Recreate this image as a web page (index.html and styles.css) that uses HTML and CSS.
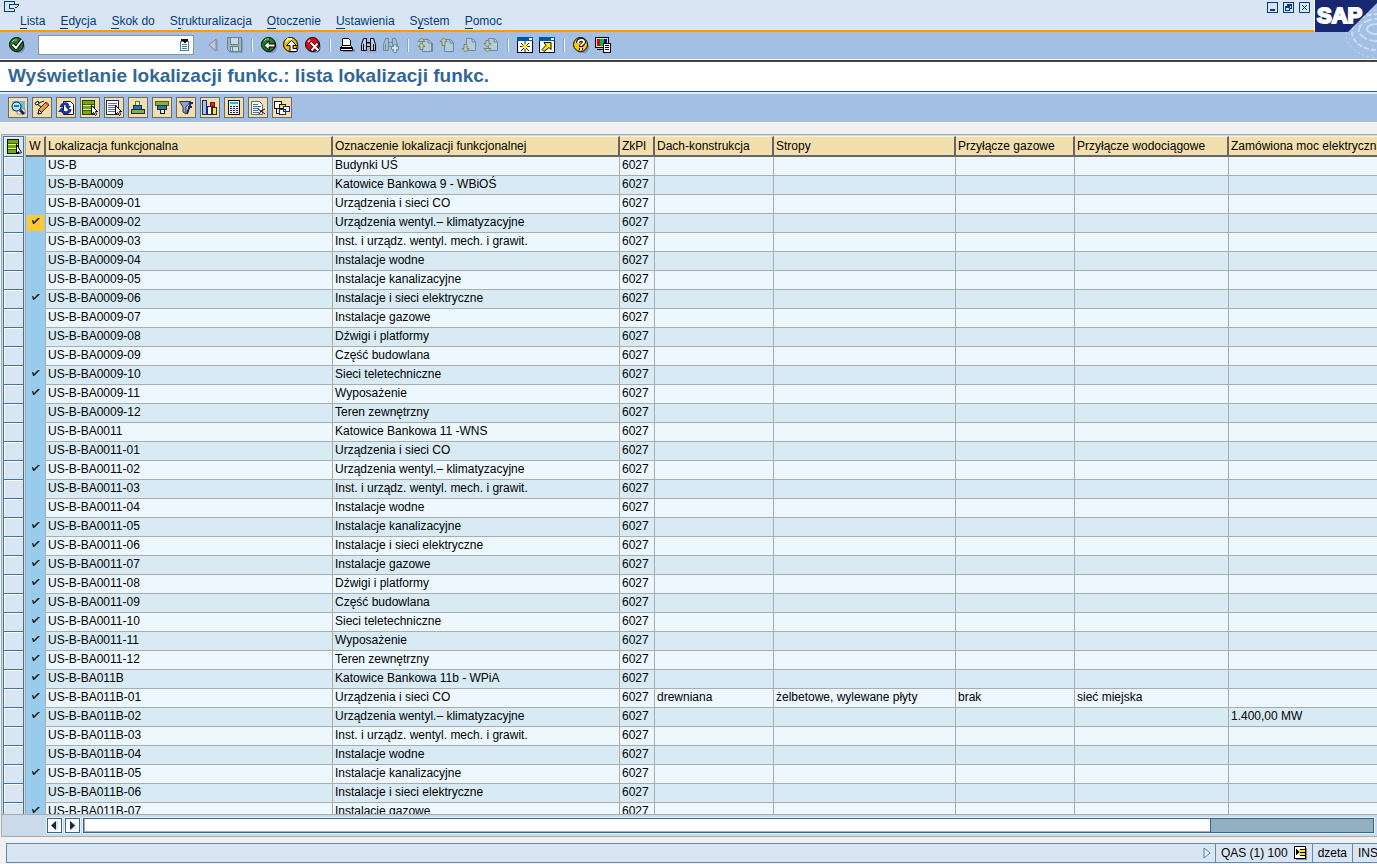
FILE: index.html
```html
<!DOCTYPE html>
<html lang="pl">
<head>
    <meta charset="UTF-8">
    <meta name="viewport" content="width=device-width, initial-scale=1.0">
    <title>Wyświetlanie lokalizacji funkc.: lista lokalizacji funkc.</title>
    <link rel="stylesheet" href="styles.css">
</head>
<body>
    <header class="header">
        <div class="header-main">
            <div class="menubar">
                <div class="window-row">
                    <button class="system-menu" aria-label="Menu">
                        <svg width="15" height="11" viewBox="0 0 15 11" fill="none" stroke="#003c7d" shape-rendering="crispEdges"><path d="M10.5 3V.5H.5v10h10V8M5.500 3.500h9M5.500 3v5M5 7.500h5M14 4v1M13 5v1M12 6v1M11 6v1" /></svg>
                    </button>
                    <div class="window-buttons">
                        <button aria-label="Minimalizuj"><svg width="11" height="11" shape-rendering="crispEdges"><path fill="none" stroke="#003c7d" d="M.5.5h10v10H.5z"/><path fill="#003c7d" d="M3 7h5v2H3z"/></svg></button>
                        <button aria-label="Przywróć"><svg width="11" height="11" shape-rendering="crispEdges"><path fill="none" stroke="#003c7d" d="M.5.5h10v10H.5zM4.500 5V2.500h4v4H7M2.500 4.500h4v4h-4z"/><path fill="#003c7d" d="M4 2h5v2H4zM2 4h5v2H2z"/></svg></button>
                        <button aria-label="Zamknij"><svg width="11" height="11"><path fill="none" stroke="#003c7d" d="M.5.5h10v10H.5zM3 3l5 5M8 3L3 8"/></svg></button>
                    </div>
                </div>
                <nav class="menu">
                    <a href="#"><u>L</u>ista</a>
                    <a href="#"><u>E</u>dycja</a>
                    <a href="#"><u>S</u>kok do</a>
                    <a href="#">S<u>t</u>rukturalizacja</a>
                    <a href="#"><u>O</u>toczenie</a>
                    <a href="#"><u>U</u>stawienia</a>
                    <a href="#">S<u>y</u>stem</a>
                    <a href="#"><u>P</u>omoc</a>
                </nav>
            </div>
            <div class="toolbar">
                <button aria-label="Enter"><svg class="icon" viewBox="0 0 16 16"><circle cx="9.500" cy="10" r="6.500" fill="#8585bf"/><circle cx="7.500" cy="7.500" r="7" fill="#207d22" stroke="#000"/><path d="M3 5l2-2h3" stroke="#8ee07c" fill="none"/><path d="M3.500 7.500l3.500 3.500 6-8" fill="none" stroke="#000" stroke-width="4"/><path d="M3.500 7.500l3.500 3.500 6-8" fill="none" stroke="#fff" stroke-width="2"/></svg></button>
                <div class="command">
                    <input type="text" aria-label="Pole komend">
                    <button aria-label="Historia"><svg width="9" height="12" shape-rendering="crispEdges"><path d="M.5 2.500h8v9h-8z" fill="#fff" stroke="#4c7da8"/><path d="M2 5.500h5M2 7.500h5M2 9.500h5" stroke="#4c7da8"/><path d="M1 0h7v2H7v1H6v1H4V3H3V2H1z" fill="#111"/></svg></button>
                </div>
                <button aria-label="Poprzednia"><svg class="icon" viewBox="0 0 16 16"><path d="M11 2v12l-7-6z" fill="#c7cbd1" stroke="#7b8796"/><path d="M12 3v11" stroke="#8189bd"/></svg></button>
                <button aria-label="Zapisz" disabled><svg class="icon" viewBox="0 0 16 16" shape-rendering="crispEdges"><path d="M3 2h13v14H3z" fill="#8e9bc8"/><path d="M.5.5h14v14h-12l-2-2z" fill="#9eb6bd" stroke="#69828f"/><path d="M4 1h7v6H4zM4 10h8v4H4z" fill="#c8d8df"/><path d="M3.500 1v6.500h8V1M3.500 14V9.500h8V14M5.500 10v4" fill="none" stroke="#69828f"/></svg></button>
                <span class="separator"></span>
                <button aria-label="Wstecz"><svg class="icon" viewBox="0 0 16 16"><circle cx="9.500" cy="10" r="6.500" fill="#8585bf"/><circle cx="7.500" cy="7.500" r="7" fill="#207d22" stroke="#000"/><path d="M3 4l2-2h3" stroke="#8ee07c" fill="none"/><path d="M3 8.500L8 4v3h6v3H8v3z" fill="#fff" stroke="#000"/></svg></button>
                <button aria-label="Zakończ"><svg class="icon" viewBox="0 0 16 16"><circle cx="9.500" cy="10" r="6.500" fill="#8585bf"/><circle cx="7.500" cy="7.500" r="7" fill="#f2b900" stroke="#000"/><path d="M3 5l2-3h4" stroke="#fff78c" stroke-width="2" fill="none"/><path d="M8.500 3.500l5 5H10v3h4v3H7v-6H3.500z" fill="#fff" stroke="#000"/></svg></button>
                <button aria-label="Anuluj"><svg class="icon" viewBox="0 0 16 16"><circle cx="9.500" cy="10" r="6.500" fill="#8585bf"/><circle cx="7.500" cy="7.500" r="7" fill="#df0613" stroke="#000"/><path d="M3 5l2-2" stroke="#ffb0b0" stroke-width="2"/><path d="M5 5l9 9M13 6l-7 8" stroke="#000" stroke-width="3"/><path d="M5.500 5.500l8 8M12.500 6.500l-6 7" stroke="#fff" stroke-width="2"/></svg></button>
                <span class="separator"></span>
                <button aria-label="Drukuj"><svg class="icon" viewBox="0 0 16 16"><path d="M3 12h13v3H4z" fill="#8585bf"/><path d="M3.500 1.500h6l2 2v6h-8z" fill="#fff" stroke="#000"/><path d="M3.500 8.500l-2 2v3h12v-3l-2-2z" fill="#fff" stroke="#000"/><path d="M1 11h12" stroke="#000" stroke-width="2"/></svg></button>
                <button aria-label="Szukaj"><svg class="icon" viewBox="0 0 16 16"><path d="M4 7h12v9H4z" fill="#a8a7cf"/><path d="M2.500 1.500h3v4h4v-4h3l2 6v6h-5v-4h-4v4h-5v-6z" fill="#bfc8e8" stroke="#000"/><path d="M5.500 5v5M9.500 5v5M2.500 7v6M12.500 7v6M6 6h4" stroke="#000"/></svg></button>
                <button aria-label="Szukaj dalej" disabled><svg class="icon" viewBox="0 0 16 16"><path d="M2.500 1.500h3v4h4v-4h3l2 6v6h-5v-4h-4v4h-5v-6z" fill="#a6bfd4" stroke="#698c9d"/><path d="M5.500 5v5M9.500 5v5M2.500 7v6" stroke="#698c9d"/><path d="M10.500 7.500h3v2h2v3h-2v3h-3v-3h-2v-3h2z" fill="#d4e1ec" stroke="#698c9d"/></svg></button>
                <span class="separator"></span>
                <button aria-label="Pierwsza strona" disabled><svg class="icon" viewBox="0 0 16 16"><path d="M5.500 2.500h6l3 3v9h-9z" fill="#b5ccda" stroke="#698c9d"/><path d="M11 3v3h3M6 14.500h9.500V6" fill="none" stroke="#7381ad"/><path d="M4.500 1l3.500 3.500H1zM4.500 6L8 9.500H6v3H3v-3H1z" fill="#c9cba4" stroke="#738475"/></svg></button>
                <button aria-label="Poprzednia strona" disabled><svg class="icon" viewBox="0 0 16 16"><path d="M5.500 2.500h6l3 3v9h-9z" fill="#b5ccda" stroke="#698c9d"/><path d="M11 3v3h3" fill="none" stroke="#7381ad"/><path d="M4.500 1L8 4.500H6v4H3v-4H1z" fill="#c9cba4" stroke="#738475"/></svg></button>
                <button aria-label="Następna strona" disabled><svg class="icon" viewBox="0 0 16 16"><path d="M5.500 1.500h6l3 3v9h-9z" fill="#b5ccda" stroke="#698c9d"/><path d="M11 2v3h3" fill="none" stroke="#7381ad"/><path d="M3 7.500h3v4h2L4.500 15 1 11.500h2z" fill="#c9cba4" stroke="#738475"/></svg></button>
                <button aria-label="Ostatnia strona" disabled><svg class="icon" viewBox="0 0 16 16"><path d="M5.500 1.500h6l3 3v9h-9z" fill="#b5ccda" stroke="#698c9d"/><path d="M11 2v3h3" fill="none" stroke="#7381ad"/><path d="M3 3.500h3v3h2L4.500 10 1 6.500h2zM1 11.500h7L4.500 15z" fill="#c9cba4" stroke="#738475"/></svg></button>
                <span class="separator"></span>
                <button aria-label="Nowy tryb"><svg class="icon" viewBox="0 0 16 16" shape-rendering="crispEdges"><path d="M.5.5h15v15H.5z" fill="#fff" stroke="#000"/><path d="M0 0h16v4H0z" fill="#0057a4"/><path d="M12 1h3v2h-3z" fill="#fff"/><g shape-rendering="auto"><path d="M8 4v11M3 9.500h10M4 6l8 8M12 6l-8 8" stroke="#222"/><path d="M8 7v5M5.500 9.500h5" stroke="#ffe900" stroke-width="2"/></g></svg></button>
                <button aria-label="Generuj skrót"><svg class="icon" viewBox="0 0 16 16"><path d="M.5.5h15v15H.5z" fill="#fff" stroke="#000"/><path d="M0 0h16v4H0z" fill="#0057a4"/><path d="M12 1h3v2h-3z" fill="#fff"/><path d="M5 5.500h7v7l-2-2-5 4-2-2 4-4z" fill="#ffe900" stroke="#000"/></svg></button>
                <span class="separator"></span>
                <button aria-label="Pomoc"><svg class="icon" viewBox="0 0 16 16"><circle cx="9.500" cy="10" r="6.500" fill="#8585bf"/><circle cx="7.500" cy="7.500" r="7" fill="#ffca00" stroke="#000"/><path d="M5 6c0-4 6-4 6-1 0 2-3 2-3 5M8 11v2" fill="none" stroke="#000" stroke-width="4"/><path d="M5 6c0-4 6-4 6-1 0 2-3 2-3 4M8 11v2" fill="none" stroke="#fff" stroke-width="2"/></svg></button>
                <button aria-label="Układ lokalny"><svg class="icon" viewBox="0 0 16 16" shape-rendering="crispEdges"><path d="M.5.5h13v10H.5zM2 12.500h9" fill="#ddd" stroke="#000"/><path d="M2 2h3v7H2z" fill="#d00"/><path d="M5 2h4v7H5z" fill="#0b2"/><path d="M9 2h3v7H9z" fill="#00c"/><path d="M8.500 6.500h7v9h-7z" fill="#fff" stroke="#000"/><path d="M10 8.500h4M10 10.500h4M10 12.500h4" stroke="#000"/></svg></button>
            </div>
        </div>
        <svg class="logo" viewBox="0 0 62 59" role="img" aria-label="SAP">
            <path d="M0 0h62v59H0z" fill="#a3c0e4"/>
            <g fill="none" stroke="#c9dcf3" stroke-width="2">
                <ellipse cx="62" cy="29" rx="10" ry="5"/>
                <ellipse cx="62" cy="30" rx="18" ry="11" stroke-dasharray="9 2"/>
                <ellipse cx="62" cy="32" rx="25" ry="18" stroke-dasharray="5 2"/>
                <ellipse cx="64" cy="34" rx="33" ry="24" stroke-dasharray="2 3" stroke-width="1"/>
            </g>
            <path d="M0 0h62v3L33 32H0z" fill="#16286f"/>
            <text class="logo-text" x="2" y="23">SAP</text>
        </svg>
    </header>

    <h1 class="title">Wyświetlanie lokalizacji funkc.: lista lokalizacji funkc.</h1>

    <div class="app-toolbar">
        <button aria-label="Szczegóły"><svg class="icon" viewBox="0 0 16 16"><path d="M2 1h13v10H2z" fill="#6eb9e8"/><path d="M7 9h8v5H7z" fill="#f7f7ef" stroke="#8a94a0"/><circle cx="6.500" cy="6.500" r="4.500" fill="#b9e5f5" stroke="#111"/><path d="M4 5h5v2H4z" fill="#0083cf"/><path d="M10 10l4 4" stroke="#16286f" stroke-width="3"/></svg></button>
        <button aria-label="Wyświetl/Zmień"><svg class="icon" viewBox="0 0 16 16"><path d="M1 3l3-2 1 3-3 1zM5 3l5-2M4 5l4 2" fill="#fff" stroke="#111"/><path d="M4 14l1-5 7-7 3 3-7 7z" fill="#f1a026" stroke="#16286f"/><path d="M11 3l3 3 1-2-2-2z" fill="#d24230"/><path d="M4 14l1-4 3 3z" fill="#fff" stroke="#111"/></svg></button>
        <button aria-label="Odśwież"><svg class="icon" viewBox="0 0 16 16"><path d="M5.500 1.500h7l3 3v10h-10z" fill="#fff" stroke="#111"/><path d="M3.500 7C4 3 9 3 10 6M12 9c0 4-6 5-8 2" fill="none" stroke="#1c30a5" stroke-width="3"/><path d="M7 6h6l-3 4zM0 12l4-5 3 5zM1 7h4V4z" fill="#1c30a5"/></svg></button>
        <button aria-label="Zaznacz wszystko"><svg class="icon" viewBox="0 0 16 16" shape-rendering="crispEdges"><path d="M.5.500h12v14H.500z" fill="#78a900" stroke="#263c12"/><path d="M1 5.500h11M1 9.500h11" stroke="#e7efb7"/><path d="M1 4.500h11M1 10.500h11" stroke="#38650c"/><path d="M9.500 5.500v9l2-2 2 3 1-1-1-3h2z" fill="#fff" stroke="#000" shape-rendering="auto"/></svg></button>
        <button aria-label="Usuń zaznaczenie"><svg class="icon" viewBox="0 0 16 16" shape-rendering="crispEdges"><path d="M.5.500h12v14H.500z" fill="#fff" stroke="#16286f"/><path d="M2 3.500h9M2 5.500h9M2 7.500h7M2 9.500h7M2 11.500h7" stroke="#646caf"/><path d="M9.500 5.500v9l2-2 2 3 1-1-1-3h2z" fill="#fff" stroke="#000" shape-rendering="auto"/></svg></button>
        <button aria-label="Sortuj rosnąco"><svg class="icon" viewBox="0 0 16 16" shape-rendering="crispEdges"><path d="M5.500 1.500h4v4h-4z" fill="#eff0b0" stroke="#5c7730"/><path d="M3.500 5.500h8v4h-8z" fill="#257c9d" stroke="#16286f"/><path d="M1.500 9.500h13v4h-13z" fill="#8ab02e" stroke="#16286f"/></svg></button>
        <button aria-label="Sortuj malejąco"><svg class="icon" viewBox="0 0 16 16" shape-rendering="crispEdges"><path d="M1.500 1.500h13v4h-13z" fill="#8ab02e" stroke="#476126"/><path d="M3.500 5.500h9v4h-9z" fill="#257c9d" stroke="#16286f"/><path d="M6.500 9.500h4v4h-4z" fill="#eff0b0" stroke="#111"/></svg></button>
        <button aria-label="Filtr"><svg class="icon" viewBox="0 0 16 16"><path d="M1.500 1.500h11L8 7v7l-3-2V7z" fill="#8ea4c8" stroke="#263250"/><path d="M9 14l4-12M11 3h4M10 7h4" fill="none" stroke="#16286f" stroke-width="2"/></svg></button>
        <button aria-label="Układ"><svg class="icon" viewBox="0 0 16 16" shape-rendering="crispEdges"><path d="M.5.500h4v14h-4z" fill="#a4c4e5" stroke="#16286f"/><path d="M5.500 6.500h4v8h-4z" fill="#fff" stroke="#16286f"/><path d="M8.500 2.500h4v4h-4z" fill="#e02020" stroke="#731616"/><path d="M10.500 7.500h4v7h-4z" fill="#ffe800" stroke="#16286f"/></svg></button>
        <button aria-label="Kalkulator"><svg class="icon" viewBox="0 0 16 16" shape-rendering="crispEdges"><path d="M2.500.500h11v14h-11z" fill="#eee" stroke="#111"/><path d="M4 2h8v2H4z" fill="#28bfc1"/><path d="M4 6.500h8M4 8.500h8M4 10.500h8M4 12.500h8" stroke="#16286f" stroke-dasharray="2 1"/></svg></button>
        <button aria-label="Klasyfikacja"><svg class="icon" viewBox="0 0 16 16"><path d="M1.500 1.500h8l3 3v10h-11z" fill="#f5faff" stroke="#536d94"/><path d="M3 4.500h5M3 6.500h8M3 8.500h6M3 10.500h5M3 12.500h6" stroke="#48709c"/><path d="M8 9l3 2 4-2M11 11l-2 3M11 11l4 3" fill="none" stroke="#111"/></svg></button>
        <button aria-label="Hierarchia"><svg class="icon" viewBox="0 0 16 16" shape-rendering="crispEdges"><path d="M.5 1.500h7v7h-7zM2.500 9v4h3" fill="#fff" stroke="#111"/><path d="M5.500 4.500h6v4h-6z" fill="#ffe800" stroke="#111"/><path d="M9.500 6.500h6v5h-6zM5.500 9.500h6v5h-6z" fill="#fff" stroke="#16286f"/></svg></button>
    </div>

    <main class="grid">
        <div class="grid-view">
            <table>
                <colgroup>
                    <col class="col-select"><col class="col-mark"><col class="col-location"><col class="col-name"><col class="col-plant"><col class="col-roof"><col class="col-ceiling"><col class="col-gas"><col class="col-water"><col>
                </colgroup>
                <thead>
                    <tr>
                        <th class="select"><button aria-label="Zaznacz wszystkie wiersze"><svg class="icon" viewBox="0 0 16 16" shape-rendering="crispEdges"><path d="M1.500.500h11v14h-11z" fill="#78a900" stroke="#111"/><path d="M2 5.500h10M2 9.500h10" stroke="#e7efb7"/><path d="M2 4.500h10M2 10.500h10" stroke="#38650c"/><path d="M10.500 5.500v9l2-2 1 2 2-1z" fill="#fff" stroke="#000" shape-rendering="auto"/></svg></button></th>
                        <th class="mark">W</th><th>Lokalizacja funkcjonalna</th><th>Oznaczenie lokalizacji funkcjonalnej</th><th>ZkPl</th><th>Dach-konstrukcja</th><th>Stropy</th><th>Przyłącze gazowe</th><th>Przyłącze wodociągowe</th><th>Zamówiona moc elektryczna</th>
                    </tr>
                </thead>
                <tbody>
                    <tr><td class="select"><button aria-label="Wiersz"></button></td><td class="mark"></td><td>US-B</td><td>Budynki UŚ</td><td>6027</td><td></td><td></td><td></td><td></td><td></td></tr>
                    <tr><td class="select"><button aria-label="Wiersz"></button></td><td class="mark"></td><td>US-B-BA0009</td><td>Katowice Bankowa 9 - WBiOŚ</td><td>6027</td><td></td><td></td><td></td><td></td><td></td></tr>
                    <tr><td class="select"><button aria-label="Wiersz"></button></td><td class="mark"></td><td>US-B-BA0009-01</td><td>Urządzenia i sieci CO</td><td>6027</td><td></td><td></td><td></td><td></td><td></td></tr>
                    <tr><td class="select"><button aria-label="Wiersz"></button></td><td class="mark active"><input type="checkbox" aria-label="W" checked></td><td>US-B-BA0009-02</td><td>Urządzenia wentyl.– klimatyzacyjne</td><td>6027</td><td></td><td></td><td></td><td></td><td></td></tr>
                    <tr><td class="select"><button aria-label="Wiersz"></button></td><td class="mark"></td><td>US-B-BA0009-03</td><td>Inst. i urządz. wentyl. mech. i grawit.</td><td>6027</td><td></td><td></td><td></td><td></td><td></td></tr>
                    <tr><td class="select"><button aria-label="Wiersz"></button></td><td class="mark"></td><td>US-B-BA0009-04</td><td>Instalacje wodne</td><td>6027</td><td></td><td></td><td></td><td></td><td></td></tr>
                    <tr><td class="select"><button aria-label="Wiersz"></button></td><td class="mark"></td><td>US-B-BA0009-05</td><td>Instalacje kanalizacyjne</td><td>6027</td><td></td><td></td><td></td><td></td><td></td></tr>
                    <tr><td class="select"><button aria-label="Wiersz"></button></td><td class="mark"><input type="checkbox" aria-label="W" checked></td><td>US-B-BA0009-06</td><td>Instalacje i sieci elektryczne</td><td>6027</td><td></td><td></td><td></td><td></td><td></td></tr>
                    <tr><td class="select"><button aria-label="Wiersz"></button></td><td class="mark"></td><td>US-B-BA0009-07</td><td>Instalacje gazowe</td><td>6027</td><td></td><td></td><td></td><td></td><td></td></tr>
                    <tr><td class="select"><button aria-label="Wiersz"></button></td><td class="mark"></td><td>US-B-BA0009-08</td><td>Dźwigi i platformy</td><td>6027</td><td></td><td></td><td></td><td></td><td></td></tr>
                    <tr><td class="select"><button aria-label="Wiersz"></button></td><td class="mark"></td><td>US-B-BA0009-09</td><td>Część budowlana</td><td>6027</td><td></td><td></td><td></td><td></td><td></td></tr>
                    <tr><td class="select"><button aria-label="Wiersz"></button></td><td class="mark"><input type="checkbox" aria-label="W" checked></td><td>US-B-BA0009-10</td><td>Sieci teletechniczne</td><td>6027</td><td></td><td></td><td></td><td></td><td></td></tr>
                    <tr><td class="select"><button aria-label="Wiersz"></button></td><td class="mark"><input type="checkbox" aria-label="W" checked></td><td>US-B-BA0009-11</td><td>Wyposażenie</td><td>6027</td><td></td><td></td><td></td><td></td><td></td></tr>
                    <tr><td class="select"><button aria-label="Wiersz"></button></td><td class="mark"></td><td>US-B-BA0009-12</td><td>Teren zewnętrzny</td><td>6027</td><td></td><td></td><td></td><td></td><td></td></tr>
                    <tr><td class="select"><button aria-label="Wiersz"></button></td><td class="mark"></td><td>US-B-BA0011</td><td>Katowice Bankowa 11 -WNS</td><td>6027</td><td></td><td></td><td></td><td></td><td></td></tr>
                    <tr><td class="select"><button aria-label="Wiersz"></button></td><td class="mark"></td><td>US-B-BA0011-01</td><td>Urządzenia i sieci CO</td><td>6027</td><td></td><td></td><td></td><td></td><td></td></tr>
                    <tr><td class="select"><button aria-label="Wiersz"></button></td><td class="mark"><input type="checkbox" aria-label="W" checked></td><td>US-B-BA0011-02</td><td>Urządzenia wentyl.– klimatyzacyjne</td><td>6027</td><td></td><td></td><td></td><td></td><td></td></tr>
                    <tr><td class="select"><button aria-label="Wiersz"></button></td><td class="mark"></td><td>US-B-BA0011-03</td><td>Inst. i urządz. wentyl. mech. i grawit.</td><td>6027</td><td></td><td></td><td></td><td></td><td></td></tr>
                    <tr><td class="select"><button aria-label="Wiersz"></button></td><td class="mark"></td><td>US-B-BA0011-04</td><td>Instalacje wodne</td><td>6027</td><td></td><td></td><td></td><td></td><td></td></tr>
                    <tr><td class="select"><button aria-label="Wiersz"></button></td><td class="mark"><input type="checkbox" aria-label="W" checked></td><td>US-B-BA0011-05</td><td>Instalacje kanalizacyjne</td><td>6027</td><td></td><td></td><td></td><td></td><td></td></tr>
                    <tr><td class="select"><button aria-label="Wiersz"></button></td><td class="mark"><input type="checkbox" aria-label="W" checked></td><td>US-B-BA0011-06</td><td>Instalacje i sieci elektryczne</td><td>6027</td><td></td><td></td><td></td><td></td><td></td></tr>
                    <tr><td class="select"><button aria-label="Wiersz"></button></td><td class="mark"><input type="checkbox" aria-label="W" checked></td><td>US-B-BA0011-07</td><td>Instalacje gazowe</td><td>6027</td><td></td><td></td><td></td><td></td><td></td></tr>
                    <tr><td class="select"><button aria-label="Wiersz"></button></td><td class="mark"><input type="checkbox" aria-label="W" checked></td><td>US-B-BA0011-08</td><td>Dźwigi i platformy</td><td>6027</td><td></td><td></td><td></td><td></td><td></td></tr>
                    <tr><td class="select"><button aria-label="Wiersz"></button></td><td class="mark"><input type="checkbox" aria-label="W" checked></td><td>US-B-BA0011-09</td><td>Część budowlana</td><td>6027</td><td></td><td></td><td></td><td></td><td></td></tr>
                    <tr><td class="select"><button aria-label="Wiersz"></button></td><td class="mark"><input type="checkbox" aria-label="W" checked></td><td>US-B-BA0011-10</td><td>Sieci teletechniczne</td><td>6027</td><td></td><td></td><td></td><td></td><td></td></tr>
                    <tr><td class="select"><button aria-label="Wiersz"></button></td><td class="mark"><input type="checkbox" aria-label="W" checked></td><td>US-B-BA0011-11</td><td>Wyposażenie</td><td>6027</td><td></td><td></td><td></td><td></td><td></td></tr>
                    <tr><td class="select"><button aria-label="Wiersz"></button></td><td class="mark"><input type="checkbox" aria-label="W" checked></td><td>US-B-BA0011-12</td><td>Teren zewnętrzny</td><td>6027</td><td></td><td></td><td></td><td></td><td></td></tr>
                    <tr><td class="select"><button aria-label="Wiersz"></button></td><td class="mark"><input type="checkbox" aria-label="W" checked></td><td>US-B-BA011B</td><td>Katowice Bankowa 11b - WPiA</td><td>6027</td><td></td><td></td><td></td><td></td><td></td></tr>
                    <tr><td class="select"><button aria-label="Wiersz"></button></td><td class="mark"><input type="checkbox" aria-label="W" checked></td><td>US-B-BA011B-01</td><td>Urządzenia i sieci CO</td><td>6027</td><td>drewniana</td><td>żelbetowe, wylewane płyty</td><td>brak</td><td>sieć miejska</td><td></td></tr>
                    <tr><td class="select"><button aria-label="Wiersz"></button></td><td class="mark"><input type="checkbox" aria-label="W" checked></td><td>US-B-BA011B-02</td><td>Urządzenia wentyl.– klimatyzacyjne</td><td>6027</td><td></td><td></td><td></td><td></td><td>1.400,00 MW</td></tr>
                    <tr><td class="select"><button aria-label="Wiersz"></button></td><td class="mark"></td><td>US-B-BA011B-03</td><td>Inst. i urządz. wentyl. mech. i grawit.</td><td>6027</td><td></td><td></td><td></td><td></td><td></td></tr>
                    <tr><td class="select"><button aria-label="Wiersz"></button></td><td class="mark"></td><td>US-B-BA011B-04</td><td>Instalacje wodne</td><td>6027</td><td></td><td></td><td></td><td></td><td></td></tr>
                    <tr><td class="select"><button aria-label="Wiersz"></button></td><td class="mark"><input type="checkbox" aria-label="W" checked></td><td>US-B-BA011B-05</td><td>Instalacje kanalizacyjne</td><td>6027</td><td></td><td></td><td></td><td></td><td></td></tr>
                    <tr><td class="select"><button aria-label="Wiersz"></button></td><td class="mark"></td><td>US-B-BA011B-06</td><td>Instalacje i sieci elektryczne</td><td>6027</td><td></td><td></td><td></td><td></td><td></td></tr>
                    <tr><td class="select"><button aria-label="Wiersz"></button></td><td class="mark"><input type="checkbox" aria-label="W" checked></td><td>US-B-BA011B-07</td><td>Instalacje gazowe</td><td>6027</td><td></td><td></td><td></td><td></td><td></td></tr>
                </tbody>
            </table>
        </div>
        <div class="scrollbar">
            <button aria-label="W lewo"><svg width="7" height="9" viewBox="0 0 7 9"><path d="M5 0h2v9H5z" fill="#d5e2f0"/><path d="M5 0v9L0 4.500z" fill="#1c2340"/></svg></button>
            <button aria-label="W prawo"><svg width="7" height="9" viewBox="0 0 7 9"><path d="M2 2h5v6L2 9z" fill="#d5e2f0"/><path d="M1 0v9l5-4.500z" fill="#1c2340"/></svg></button>
            <div class="track"><div class="thumb"></div></div>
        </div>
    </main>

    <footer class="status">
        <div class="message"><svg width="8" height="12" viewBox="0 0 8 12"><path d="M1 1v10l6-5z" fill="#e8f2fc" stroke="#4f7da8"/></svg></div>
        <div class="system">QAS (1) 100 <svg width="13" height="14" viewBox="0 0 13 14" shape-rendering="crispEdges"><path d="M2 2h11v12H2z" fill="#8585bf"/><path d="M.5.500h11v12H.500z" fill="#fff" stroke="#000"/><path d="M5 3h6v6H5z" fill="#ffe800"/><path d="M6 3.500h5M6 6.500h5M6 9.500h5" stroke="#000"/><path d="M2 3l3 3-3 3z"/></svg></div>
        <div class="host">dzeta</div>
        <div class="mode">INS</div>
    </footer>
</body>
</html>
```
FILE: styles.css
```css
* {
    box-sizing: border-box;
}

body {
    font-family: "Liberation Sans", Arial, sans-serif;
    font-size: 12px;
    line-height: 16px;
    margin: 0;
    height: 100vh;
    display: flex;
    flex-direction: column;
    overflow: hidden;
    background: #f1f1f1;
    color: #000;
}

button {
    padding: 0;
    border: none;
    background: none;
    font: inherit;
    display: flex;
    align-items: center;
    justify-content: center;
}

svg {
    display: block;
}

.icon {
    width: 16px;
    height: 16px;
}

/* Menu, main toolbar and logo */

.header {
    display: flex;
    flex-shrink: 0;
    background: #fff;
    border-bottom: 2px solid #444;
}

.header-main {
    flex: 1;
    min-width: 0;
}

.menubar {
    height: 32px;
    background: #d9e5f3;
    border-bottom: 2px solid #fc9b00;
    border-right: 1px solid #fff;
}

.window-row {
    display: flex;
    justify-content: space-between;
    height: 13px;
    padding: 1px 4px 0 4px;
}

.system-menu {
    height: 11px;
}

.window-buttons {
    display: flex;
    gap: 5px;
}

.menu {
    display: flex;
    gap: 15px;
    padding-left: 20px;
}

.menu a {
    color: #003c7d;
    text-decoration: none;
}

.menu u {
    text-decoration: none;
    display: inline-block;
    line-height: 14px;
    border-bottom: 1px solid #003c7d;
}

.toolbar {
    display: flex;
    align-items: center;
    height: 28px;
    padding: 0 6px 1px;
    background: #a3c0e4;
    border-bottom: 1px solid #fff;
}

.toolbar button {
    width: 22px;
    height: 22px;
}

.command {
    display: flex;
    align-items: center;
    width: 156px;
    height: 20px;
    margin: 0 8px 0 10px;
    padding-right: 3px;
    background: #fff;
    border: 1px solid #8a9199;
}

.command input {
    flex: 1;
    min-width: 0;
    border: none;
    outline: none;
    background: none;
    font: inherit;
}

.command button {
    width: 12px;
    height: 16px;
}

.separator {
    width: 2px;
    height: 13px;
    margin: 0 5px;
    background: #eef3f8;
    border-left: 1px solid #8ba5c6;
}

.logo {
    width: 62px;
    height: 59px;
}

.logo-text {
    font: bold 22px "Liberation Sans", Arial, sans-serif;
    fill: #fff;
    stroke: #fff;
    stroke-width: 2px;
}

.title {
    flex-shrink: 0;
    margin: 0;
    padding: 2px 8px 3px;
    font-size: 19px;
    line-height: 24px;
    color: #2f6798;
    background: #fff;
    border-bottom: 1px solid #255f96;
}

.app-toolbar {
    display: flex;
    gap: 4px;
    flex-shrink: 0;
    padding: 3px 8px 4px;
    background: #a3c0e4;
    border-top: 2px solid #e7eef6;
    border-bottom: 1px solid #fff;
}

.app-toolbar button {
    width: 20px;
    height: 21px;
    background: #f3dfae;
    border: 1px solid #6c6a64;
}

/* List */

.grid {
    flex: 1;
    min-height: 0;
    display: flex;
    flex-direction: column;
    margin: 11px 0 6px 1px;
    background: #cbdae8;
    border: 1px solid #acacac;
    border-right: none;
}

.grid-view {
    flex: 1;
    min-height: 0;
    overflow: hidden;
    padding: 1px 0 0 1px;
    border-bottom: 1px solid #acacac;
}

table {
    width: 100%;
    table-layout: fixed;
    border-collapse: separate;
    border-spacing: 0;
}

.col-select {
    width: 23px;
}

.col-mark {
    width: 20px;
}

.col-location,
.col-name {
    width: 287px;
}

.col-plant {
    width: 35px;
}

.col-roof,
.col-gas {
    width: 119px;
}

.col-ceiling {
    width: 182px;
}

.col-water {
    width: 154px;
}

th,
td {
    padding: 0 2px;
    text-align: left;
    font-weight: normal;
    white-space: nowrap;
    overflow: hidden;
}

th {
    height: 21px;
    line-height: 16px;
    background: #f3dfae;
    border-top: 1px solid #fdf6c8;
    border-right: 2px solid #666;
    border-bottom: 2px solid #666;
}

th:last-child,
td:last-child {
    border-right: none;
}

td {
    height: 19px;
    line-height: 16px;
    padding-bottom: 2px;
    background: #ecf8fd;
    border-right: 1px solid #acacac;
    border-bottom: 1px solid #acacac;
}

tbody tr:nth-child(even) td {
    background: #d8ebf4;
}

th.mark {
    padding: 0;
    text-align: center;
}

tbody tr td.mark {
    padding: 0;
    background: #99cbed;
    border-bottom-color: #99cbed;
}

tbody tr td.active {
    background: #ffc832;
    box-shadow: inset 0 0 0 1px #99cbed;
}

.mark input {
    appearance: none;
    display: block;
    width: 8px;
    height: 7px;
    margin: 0 0 3px 6px;
}

/* small tick with a short left arm */
.mark input:checked {
    background: #111;
    clip-path: polygon(0 2px, 1px 2px, 2px 4px, 6px 0, 8px 0, 2px 6px, 1px 6px);
}

th.select,
tbody tr td.select {
    padding: 0;
    background: #cbdae8;
    border: none;
    border-right: 1px solid #acacac;
}

.select button {
    width: 21px;
    height: 19px;
    background: #d9e5f3;
    border: 1px solid #3b75a6;
    border-top: none;
    box-shadow: inset 1px 1px #fff;
}

th.select button {
    height: 21px;
    border-top: 1px solid #3b75a6;
}

.scrollbar {
    display: flex;
    align-items: center;
    gap: 3px;
    height: 21px;
    padding: 0 3px 0 45px;
}

.scrollbar button {
    width: 15px;
    height: 15px;
    background: #fff;
    border: 1px solid #2f6798;
    outline: 1px solid #e9f1f8;
}

.track {
    flex: 1;
    display: flex;
    height: 15px;
    background: #94afc0;
    border: 1px solid #2f6798;
    outline: 1px solid #e9f1f8;
}

.thumb {
    width: 87.4%;
    background: #fff;
    border-right: 1px solid #2f6798;
    box-shadow: inset 1px -1px #acacac;
}

/* Status bar */

.status {
    display: flex;
    flex-shrink: 0;
    height: 20px;
    margin: 0 0 1px 6px;
    line-height: 19px;
    background: #d9e5f3;
    border: 1px solid #5f8bb2;
    border-right: none;
}

.message {
    flex: 1;
    display: flex;
    align-items: center;
    justify-content: flex-end;
    padding-right: 4px;
}

.system,
.host,
.mode {
    display: flex;
    align-items: center;
    gap: 6px;
    padding: 0 5px;
    border-left: 1px solid #5f8bb2;
}

.mode {
    width: 25px;
    overflow: hidden;
}
```
